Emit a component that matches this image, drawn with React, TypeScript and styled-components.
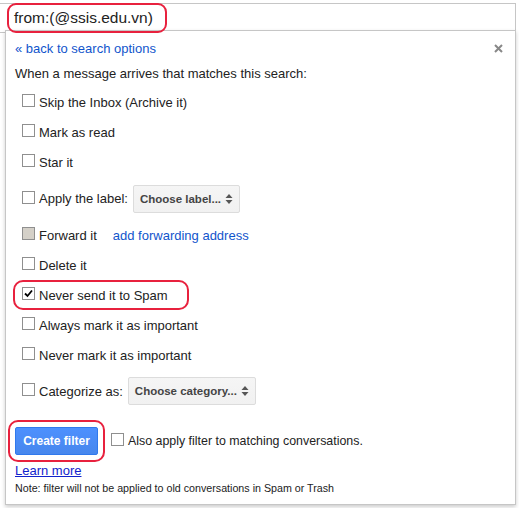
import styled, { createGlobalStyle } from "styled-components";

const GlobalStyle = createGlobalStyle`
  html, body {
    margin: 0;
    padding: 0;
    background: #fff;
  }
  body {
    font-family: "Liberation Sans", Arial, sans-serif;
    color: #222;
  }
`;

const Page = styled.div`
  width: 519px;
  height: 508px;
  padding-top: 3px;
  box-sizing: border-box;
  overflow: hidden;
`;

const SearchBar = styled.div`
  display: flex;
  width: 516px;
  height: 30px;
  box-sizing: border-box;
  border-top: 1px solid #c6c6c6;
  border-right: 1px solid #c6c6c6;
  border-bottom: 1px solid #c6c6c6;
`;

const QueryHighlight = styled.div`
  position: relative;
  z-index: 2;
  display: flex;
  align-items: center;
  height: 30px;
  margin: -1px 0 0 7px;
  padding: 0 12px 0 5px;
  box-sizing: border-box;
  border: 2px solid #e8213e;
  border-radius: 9px;
  font-size: 15.5px;
  color: #222;
`;

const Panel = styled.div`
  position: relative;
  width: 511px;
  margin: -3px 0 0 5px;
  padding: 8px 12px 9px 9px;
  box-sizing: border-box;
  border: 1px solid #c6c6c6;
  background: #fff;
  box-shadow: 0 2px 4px rgba(0, 0, 0, 0.2);
`;

const Header = styled.div`
  display: flex;
  justify-content: space-between;
  align-items: center;
  height: 18px;
`;

const BackLink = styled.a`
  font-size: 13px;
  color: #15c;
  text-decoration: none;
`;

const Intro = styled.div`
  margin-top: 8px;
  font-size: 13px;
  line-height: 18px;
`;

const OptionList = styled.div`
  display: flex;
  flex-direction: column;
  margin-top: 4px;
  padding-left: 7px;
`;

const OptionRow = styled.label<{ $height?: number; $marked?: boolean }>`
  display: flex;
  align-items: center;
  align-self: flex-start;
  gap: 4px;
  height: ${({ $height }) => $height ?? 30}px;
  box-sizing: border-box;
  font-size: 13px;
  color: #222;
  white-space: nowrap;
  ${({ $marked }) =>
    $marked &&
    `
    margin-left: -9px;
    padding: 0 19px 0 7px;
    border: 2px solid #e8213e;
    border-radius: 10px;
  `}
`;

const Box = styled.span<{ $disabled?: boolean }>`
  display: flex;
  align-items: center;
  justify-content: center;
  flex: none;
  width: 13px;
  height: 13px;
  box-sizing: border-box;
  border: 1px solid #8f8f8f;
  background: ${({ $disabled }) => ($disabled ? "#d4d0c8" : "#fff")};
  margin-top: -3px;
`;

const Select = styled.span<{ $width: number }>`
  display: flex;
  align-items: center;
  justify-content: space-between;
  width: ${({ $width }) => $width}px;
  height: 28px;
  margin-left: 1px;
  padding: 0 6px;
  box-sizing: border-box;
  border: 1px solid #dcdcdc;
  border-radius: 2px;
  background: linear-gradient(#f5f5f5, #f1f1f1);
  font-size: 11.5px;
  font-weight: bold;
  color: #444;
  white-space: nowrap;
`;

const InlineLink = styled.a`
  margin-left: 12px;
  color: #15c;
  text-decoration: none;
`;

const Footer = styled.div`
  display: flex;
  align-items: center;
  margin-top: 15px;
`;

const ButtonHighlight = styled.div`
  position: relative;
  z-index: 2;
  margin: -7px;
  padding: 5px;
  border: 2px solid #e8213e;
  border-radius: 10px;
`;

const CreateButton = styled.button`
  display: block;
  width: 83px;
  height: 28px;
  padding: 0;
  border: 1px solid #3079ed;
  border-radius: 2px;
  background: linear-gradient(#4d90fe, #4787ed);
  color: #fff;
  font-family: "Liberation Sans", Arial, sans-serif;
  font-size: 12px;
  font-weight: bold;
`;

const ApplyLabel = styled.label`
  display: flex;
  align-items: center;
  gap: 4px;
  margin-left: 13px;
  font-size: 12.4px;
  white-space: nowrap;
`;

const LearnMore = styled.a`
  display: block;
  align-self: flex-start;
  width: fit-content;
  margin-top: 7px;
  font-size: 13px;
  line-height: 18px;
  color: #12c;
  text-decoration: underline;
`;

const Note = styled.div`
  margin-top: 1px;
  font-size: 10.7px;
  line-height: 14px;
  color: #222;
  white-space: nowrap;
`;

function Checkbox({ checked, disabled }: { checked?: boolean; disabled?: boolean }) {
  return (
    <Box $disabled={disabled}>
      {checked && (
        <svg width="9" height="9" viewBox="0 0 9 9">
          <path d="M1 4.5 L3.5 7 L8 1.5" fill="none" stroke="#000" strokeWidth="1.8" />
        </svg>
      )}
    </Box>
  );
}

function Arrows() {
  return (
    <svg width="8" height="12" viewBox="0 0 8 12">
      <path d="M4 1 L7.5 5 L0.5 5 Z" fill="#555" />
      <path d="M4 11 L7.5 7 L0.5 7 Z" fill="#555" />
    </svg>
  );
}

function CloseIcon() {
  return (
    <svg width="9" height="9" viewBox="0 0 9 9">
      <path d="M1 1 L8 8 M8 1 L1 8" stroke="#888" strokeWidth="2" />
    </svg>
  );
}

const simpleOptions = [
  "Skip the Inbox (Archive it)",
  "Mark as read",
  "Star it",
];

export default function App() {
  return (
    <>
      <GlobalStyle />
      <Page>
        <SearchBar>
          <QueryHighlight>from:(@ssis.edu.vn)</QueryHighlight>
        </SearchBar>
        <Panel>
          <Header>
            <BackLink href="#">« back to search options</BackLink>
            <CloseIcon />
          </Header>
          <Intro>When a message arrives that matches this search:</Intro>
          <OptionList>
            {simpleOptions.map((text) => (
              <OptionRow key={text}>
                <Checkbox />
                {text}
              </OptionRow>
            ))}
            <OptionRow $height={43}>
              <Checkbox />
              Apply the label:
              <Select $width={107}>
                Choose label...
                <Arrows />
              </Select>
            </OptionRow>
            <OptionRow>
              <Checkbox disabled />
              Forward it
              <InlineLink href="#">add forwarding address</InlineLink>
            </OptionRow>
            <OptionRow>
              <Checkbox />
              Delete it
            </OptionRow>
            <OptionRow $marked>
              <Checkbox checked />
              Never send it to Spam
            </OptionRow>
            <OptionRow>
              <Checkbox />
              Always mark it as important
            </OptionRow>
            <OptionRow>
              <Checkbox />
              Never mark it as important
            </OptionRow>
            <OptionRow $height={42}>
              <Checkbox />
              Categorize as:
              <Select $width={128}>
                Choose category...
                <Arrows />
              </Select>
            </OptionRow>
          </OptionList>
          <Footer>
            <ButtonHighlight>
              <CreateButton>Create filter</CreateButton>
            </ButtonHighlight>
            <ApplyLabel>
              <Checkbox />
              Also apply filter to matching conversations.
            </ApplyLabel>
          </Footer>
          <LearnMore href="#">Learn more</LearnMore>
          <Note>Note: filter will not be applied to old conversations in Spam or Trash</Note>
        </Panel>
      </Page>
    </>
  );
}
